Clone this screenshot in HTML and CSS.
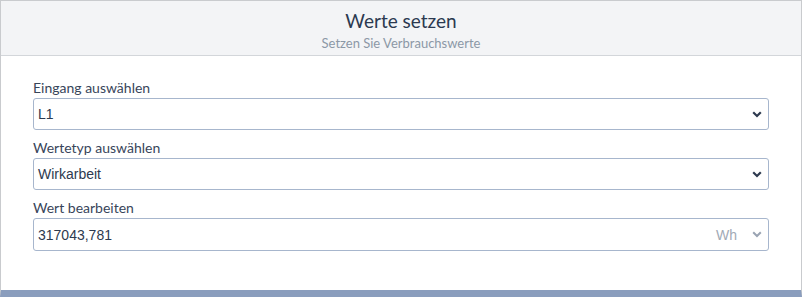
FILE: index.html
```html
<!DOCTYPE html>
<html lang="de">
<head>
<meta charset="utf-8">
<link rel="stylesheet" href="styles.css">
</head>
<body>
<div class="card">
  <div class="head">
    <div class="title">Werte setzen</div>
    <div class="sub">Setzen Sie Verbrauchswerte</div>
  </div>
  <div class="body">
    <div class="group">
      <div class="label">Eingang auswählen</div>
      <div class="field">
        <span class="val">L1</span>
        <svg class="chev" width="10" height="7" viewBox="0 0 10 7"><path d="M1.2 1.2 L5 5 L8.8 1.2" fill="none" stroke="#2d3a4f" stroke-width="2.2"/></svg>
      </div>
    </div>
    <div class="group">
      <div class="label">Wertetyp auswählen</div>
      <div class="field">
        <span class="val">Wirkarbeit</span>
        <svg class="chev" width="10" height="7" viewBox="0 0 10 7"><path d="M1.2 1.2 L5 5 L8.8 1.2" fill="none" stroke="#2d3a4f" stroke-width="2.2"/></svg>
      </div>
    </div>
    <div class="group">
      <div class="label">Wert bearbeiten</div>
      <div class="field tall">
        <span class="val">317043,781</span>
        <span class="unit">Wh</span>
        <svg class="chev" width="10" height="7" viewBox="0 0 10 7"><path d="M1.2 1.2 L5 5 L8.8 1.2" fill="none" stroke="#9aa4b3" stroke-width="2"/></svg>
      </div>
    </div>
  </div>
</div>
</body>
</html>
```

FILE: styles.css
```css
html, body {
  margin: 0;
  padding: 0;
  background: #fff;
}
body {
  width: 802px;
  height: 297px;
  overflow: hidden;
}
.card {
  box-sizing: border-box;
  width: 802px;
  height: 297px;
  border: 1px solid #c9cbce;
  border-bottom: 7px solid #8a9dbd;
  display: flex;
  flex-direction: column;
  font-family: "Source Sans Pro", Lato, "Noto Sans", sans-serif;
}
.head {
  background: #f3f4f6;
  border-bottom: 1px solid #d3d6da;
  height: 55px;
  display: flex;
  flex-direction: column;
  align-items: center;
  padding-top: 8px;
  box-sizing: border-box;
}
.title {
  font-size: 19px;
  line-height: 24px;
  color: #2b3950;
}
.sub {
  font-size: 13px;
  line-height: 16px;
  color: #8c98a6;
  margin-top: 2px;
}
.body {
  padding: 22px 32px 0 32px;
  display: flex;
  flex-direction: column;
  gap: 8px;
}
.label {
  font-size: 14px;
  line-height: 20px;
  color: #38455a;
}
.field {
  box-sizing: border-box;
  height: 32px;
  border: 1px solid #a7b6cd;
  border-radius: 3px;
  display: flex;
  align-items: center;
  padding: 0 4px 0 4px;
  font-family: "Liberation Sans", Arial, sans-serif;
  font-size: 14px;
  color: #2d3a4f;
}
.field.tall {
  height: 33px;
}
.val {
  flex: 1;
}
.unit {
  color: #a2aab6;
  margin-right: 15px;
}
.chev {
  margin-right: 2px;
}
```
